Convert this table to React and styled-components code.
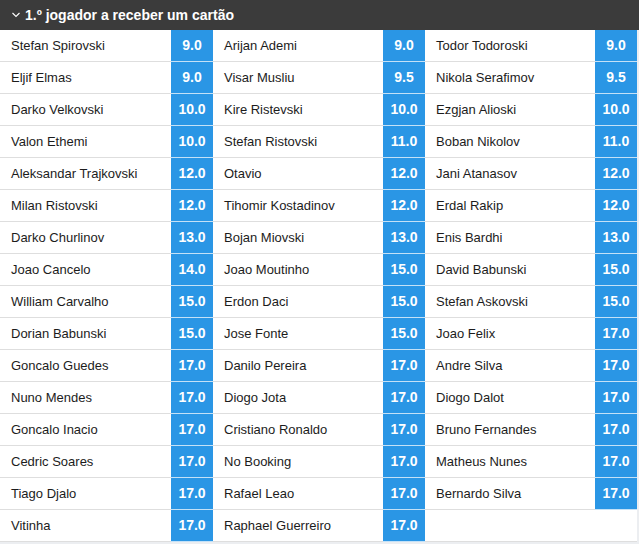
import React from "react";
import styled, { createGlobalStyle } from "styled-components";

const players = [
    ["Stefan Spirovski", "9.0"], ["Arijan Ademi", "9.0"], ["Todor Todoroski", "9.0"],
    ["Eljif Elmas", "9.0"], ["Visar Musliu", "9.5"], ["Nikola Serafimov", "9.5"],
    ["Darko Velkovski", "10.0"], ["Kire Ristevski", "10.0"], ["Ezgjan Alioski", "10.0"],
    ["Valon Ethemi", "10.0"], ["Stefan Ristovski", "11.0"], ["Boban Nikolov", "11.0"],
    ["Aleksandar Trajkovski", "12.0"], ["Otavio", "12.0"], ["Jani Atanasov", "12.0"],
    ["Milan Ristovski", "12.0"], ["Tihomir Kostadinov", "12.0"], ["Erdal Rakip", "12.0"],
    ["Darko Churlinov", "13.0"], ["Bojan Miovski", "13.0"], ["Enis Bardhi", "13.0"],
    ["Joao Cancelo", "14.0"], ["Joao Moutinho", "15.0"], ["David Babunski", "15.0"],
    ["William Carvalho", "15.0"], ["Erdon Daci", "15.0"], ["Stefan Askovski", "15.0"],
    ["Dorian Babunski", "15.0"], ["Jose Fonte", "15.0"], ["Joao Felix", "17.0"],
    ["Goncalo Guedes", "17.0"], ["Danilo Pereira", "17.0"], ["Andre Silva", "17.0"],
    ["Nuno Mendes", "17.0"], ["Diogo Jota", "17.0"], ["Diogo Dalot", "17.0"],
    ["Goncalo Inacio", "17.0"], ["Cristiano Ronaldo", "17.0"], ["Bruno Fernandes", "17.0"],
    ["Cedric Soares", "17.0"], ["No Booking", "17.0"], ["Matheus Nunes", "17.0"],
    ["Tiago Djalo", "17.0"], ["Rafael Leao", "17.0"], ["Bernardo Silva", "17.0"],
    ["Vitinha", "17.0"], ["Raphael Guerreiro", "17.0"], null,
];

const App = () => {
    return (
        <>
            <GlobalStyle />
            <Market>
                <Header>
                    <svg width="8" height="6" viewBox="0 0 8 6">
                        <polyline points="0.5,1 4,4.5 7.5,1" fill="none" stroke="#fff" strokeWidth="1.1" />
                    </svg>
                    <Title>1.º jogador a receber um cartão</Title>
                </Header>
                <Grid>
                    {players.map((p, i) =>
                        p ? (
                            <Selection key={i}>
                                <Name>{p[0]}</Name>
                                <Odd>{p[1]}</Odd>
                            </Selection>
                        ) : (
                            <Selection key={i} />
                        )
                    )}
                </Grid>
            </Market>
        </>
    );
};

const GlobalStyle = createGlobalStyle`
body {
    margin: 0;
    background: #eceef1;
    font-family: "Liberation Sans", Arial, sans-serif;
}
`;

const Market = styled.div`
width: 639px;
`;

const Header = styled.div`
height: 30px;
background-color: #3b3b3b;
display: flex;
align-items: center;
gap: 5px;
padding-left: 12px;
color: #fff;
`;

const Title = styled.span`
font-size: 14px;
font-weight: bold;
`;

const Grid = styled.div`
width: 637px;
display: grid;
grid-template-columns: 213px 212px 212px;
`;

const Selection = styled.div`
display: grid;
grid-template-columns: 1fr 42px;
height: 32px;
background: #fff;
border-bottom: 1px solid #dedede;
box-sizing: border-box;
`;

const Name = styled.div`
display: flex;
align-items: center;
padding: 0 0 1px 11px;
font-size: 13px;
color: #1c1c1c;
white-space: nowrap;
`;

const Odd = styled.div`
display: flex;
align-items: center;
justify-content: center;
padding-bottom: 1px;
background-color: #2a96e5;
color: #fff;
font-size: 14px;
font-weight: bold;
margin-bottom: -1px;
border-bottom: 1px solid #c4e1f7;
`;

export default App;
